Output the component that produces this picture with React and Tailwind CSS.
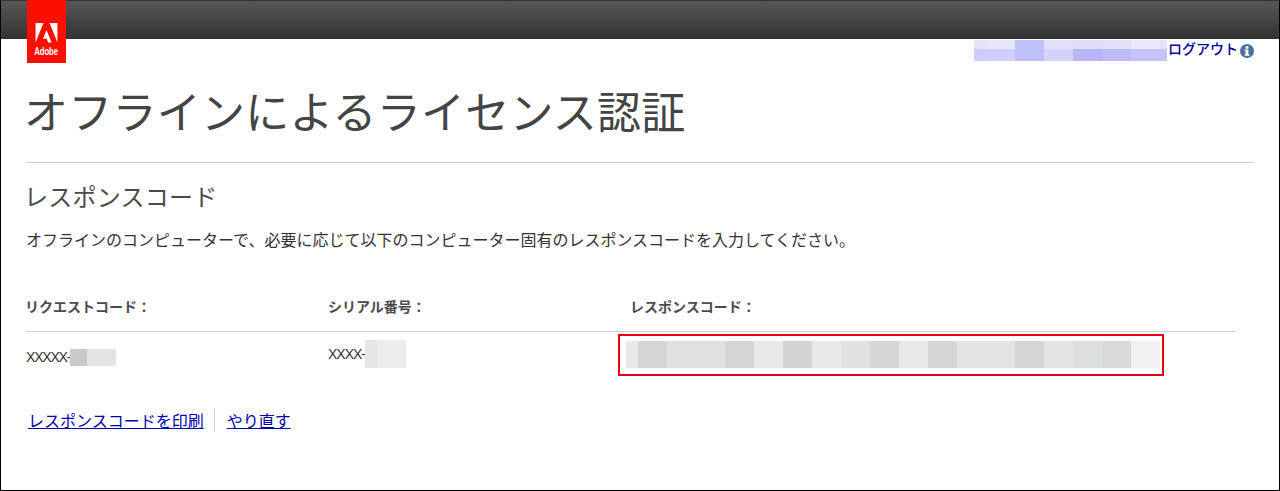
const font = { fontFamily: '"Noto Sans CJK JP", "Liberation Sans", sans-serif' }
const latin = { fontFamily: '"Liberation Sans", sans-serif' }

// mosaic cells that hide the private values: [width, colour]
const responseCells = [
  [12, "#e8e8e6"], [29, "#d4d6d5"], [58, "#e0e0e0"], [29, "#d5d5d5"], [29, "#e8e8e8"],
  [29, "#d2d2d2"], [29, "#ebe9e8"], [29, "#e2e2e2"], [29, "#d5d7d6"], [29, "#e8e8e6"],
  [29, "#d5d6d6"], [58, "#e5e4e2"], [29, "#d3d6d5"], [29, "#e3e3e3"], [29, "#dcdee0"],
  [29, "#dad9d7"], [29, "#f0f1f3"],
]
const nameTop = [[12, "#e3e3fb"], [29, "#e6e6fb"], [29, "#bfbffa"], [29, "#e0e0fb"], [29, "#dfdffb"], [29, "#e0e0fb"], [29, "#e9e9fd"], [7, "#e0e0fb"]]
const nameBottom = [[12, "#cdcdfb"], [29, "#cfcffb"], [29, "#bfbffa"], [29, "#d3d3fb"], [29, "#b7b7f7"], [29, "#bcbcf8"], [29, "#c4c4fa"], [7, "#c4c4fa"]]

function Cells({ cells, className }) {
  return (
    <div className={`flex ${className}`}>
      {cells.map(([w, c], i) => (
        <div key={i} style={{ width: w, backgroundColor: c }} />
      ))}
    </div>
  )
}

function AdobeLogo() {
  return (
    <div className="absolute top-0 left-[26px] w-[39px] h-[63px] bg-[#fa0f00] flex flex-col items-center justify-end pb-[7px]">
      <svg viewBox="0 0 24 22" className="w-[23px] h-[20px] mb-[3px]" fill="#fff">
        <path d="M0 0h8.6L0 21.5z" />
        <path d="M15.4 0H24v21.5z" />
        <path d="M12 7.8l5.6 13.7h-3.8l-1.6-4.2H8.2z" />
      </svg>
      <span className="text-[11px] leading-[10px] font-bold text-white scale-x-[0.7]" style={latin}>Adobe</span>
    </div>
  )
}

export default function App() {
  return (
    <div className="relative h-[491px] w-[1280px] bg-white border-x border-b border-black overflow-hidden text-[#4b4b4b]" style={font}>
      <div className="h-[39px] bg-gradient-to-b from-[#575757] to-[#333333] border-t border-[#333]" />
      <AdobeLogo />

      <div className="flex justify-end items-start pr-[112px]">
        <Cells cells={nameTop} className="h-[9px] mt-[1px]" />
      </div>
      <div className="flex items-center justify-end h-[12px] pr-[112px]">
        <Cells cells={nameBottom} className="h-[12px]" />
      </div>
      <div className="absolute top-[38px] left-[1167px] flex items-center gap-[2px]">
        <a className="text-[14px] leading-[20px] font-medium text-[#0000a0]">ログアウト</a>
        <svg viewBox="0 0 16 16" className="w-[14px] h-[14px] mt-[5px]">
          <circle cx="8" cy="8" r="8" fill="#4a7199" />
          <rect x="6.4" y="2.6" width="3.2" height="2.8" fill="#fff" />
          <path d="M5.4 6.4h4.2v5.4h1v1.6H5.4v-1.6h1V8h-1z" fill="#fff" />
        </svg>
      </div>

      <div className="pl-[25px] pr-[25px] pt-[19px]">
        <h1 className="text-[44px] leading-[60px] tracking-[0.25px] border-b border-[#cfcfcf] h-[83px] text-[#444]">
          <span className="-ml-[2px] inline-block">オフラインによるライセンス認証</span>
        </h1>
        <h2 className="mt-[16px] -ml-[2px] text-[24px] leading-[34px] tracking-[0.25px] text-[#4b4b4b]">レスポンスコード</h2>
        <p className="mt-[15px] text-[16px] leading-[22px] text-[#333]">
          オフラインのコンピューターで、必要に応じて以下のコンピューター固有のレスポンスコードを入力してください。
        </p>

        <div className="mt-[46px] w-[1210px]">
          <div className="flex h-[36px] border-b border-[#cfcfcf] text-[14px] leading-[20px] font-bold text-[#4b4b4b]">
            <div className="w-[303px] -ml-[1px]">リクエストコード：</div>
            <div className="w-[302px]">シリアル番号：</div>
            <div>レスポンスコード：</div>
          </div>
          <div className="flex items-start h-[45px] text-[14px] text-[#333]">
            <div className="w-[302px] flex items-center mt-[8px]">
              <span className="leading-[34px] tracking-[-1.2px]" style={latin}>XXXXX-</span>
              <Cells cells={[[17, "#c9c9c9"], [29, "#e3e3e3"]]} className="h-[17px]" />
            </div>
            <div className="w-[290px] flex items-center mt-[8px]">
              <span className="leading-[28px] tracking-[-1px]" style={latin}>XXXX-</span>
              <Cells cells={[[12, "#e6e6e6"], [29, "#ececec"]]} className="h-[28px]" />
            </div>
            <div className="w-[546px] h-[42px] mt-[2px] border-2 border-[#e60012] pl-[6px] pt-[5px]">
              <Cells cells={responseCells} className="h-[27px]" />
            </div>
          </div>
        </div>

        <div className="mt-[31px] ml-[2px] flex items-center text-[16px] text-[#0000b0]">
          <a className="underline leading-[24px] pr-[10px] border-r border-[#d0d0d0]">レスポンスコードを印刷</a>
          <a className="underline leading-[24px] ml-[12px]">やり直す</a>
        </div>
      </div>
    </div>
  )
}
